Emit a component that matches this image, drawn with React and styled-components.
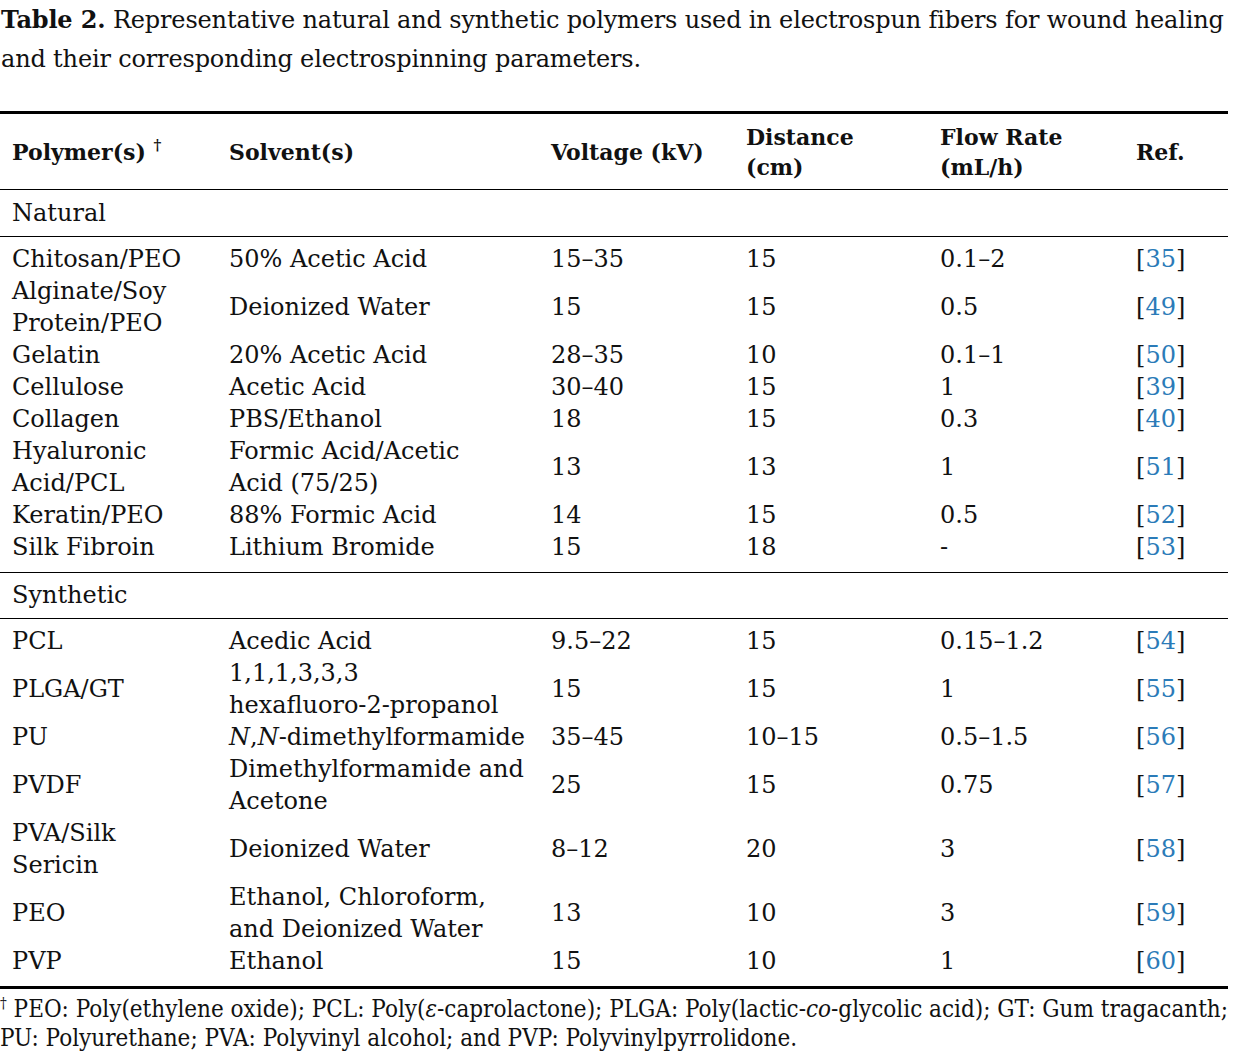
import styled, {createGlobalStyle} from "styled-components";

const GlobalStyle = createGlobalStyle`
  html, body {
    margin: 0;
    padding: 0;
    background: #fff;
  }
  body {
    font-family: "DejaVu Serif", "Liberation Serif", serif;
    color: #111;
  }
`;

const natural = [
  ["Chitosan/PEO", "50% Acetic Acid", "15–35", "15", "0.1–2", "35"],
  [["Alginate/Soy", "Protein/PEO"], "Deionized Water", "15", "15", "0.5", "49"],
  ["Gelatin", "20% Acetic Acid", "28–35", "10", "0.1–1", "50"],
  ["Cellulose", "Acetic Acid", "30–40", "15", "1", "39"],
  ["Collagen", "PBS/Ethanol", "18", "15", "0.3", "40"],
  [["Hyaluronic", "Acid/PCL"], ["Formic Acid/Acetic", "Acid (75/25)"], "13", "13", "1", "51"],
  ["Keratin/PEO", "88% Formic Acid", "14", "15", "0.5", "52"],
  ["Silk Fibroin", "Lithium Bromide", "15", "18", "-", "53"],
];

const synthetic = [
  ["PCL", "Acedic Acid", "9.5–22", "15", "0.15–1.2", "54"],
  ["PLGA/GT", ["1,1,1,3,3,3", "hexafluoro-2-propanol"], "15", "15", "1", "55"],
  ["PU", <><i>N</i>,<i>N</i>-dimethylformamide</>, "35–45", "10–15", "0.5–1.5", "56"],
  ["PVDF", ["Dimethylformamide and", "Acetone"], "25", "15", "0.75", "57"],
  [["PVA/Silk", "Sericin"], "Deionized Water", "8–12", "20", "3", "58"],
  ["PEO", ["Ethanol, Chloroform,", "and Deionized Water"], "13", "10", "3", "59"],
  ["PVP", "Ethanol", "15", "10", "1", "60"],
];

const widths = [217, 322, 195, 194, 196, 104];

const Lines = ({value}) => {
  if (!Array.isArray(value)) return value;
  return value.map((line, i) => (
    <span key={i}>
      {i > 0 && <br />}
      {line}
    </span>
  ));
};

const Group = ({label, rows}) => (
  <tbody>
    <tr>
      <GroupCell colSpan={6}>{label}</GroupCell>
    </tr>
    {rows.map((row, r) => {
      const edge = r === 0 ? "first" : r === rows.length - 1 ? "last" : "";
      return (
        <tr key={r}>
          {row.slice(0, 5).map((cell, c) => (
            <Cell key={c} $edge={edge}>
              <Lines value={cell} />
            </Cell>
          ))}
          <Cell $edge={edge}>
            [<RefNum>{row[5]}</RefNum>]
          </Cell>
        </tr>
      );
    })}
  </tbody>
);

const App = () => {
  return (
    <>
      <GlobalStyle />
      <Page>
        <Caption>
          <b>Table 2.</b> Representative natural and synthetic polymers used in electrospun fibers for wound healing
          <br />
          and their corresponding electrospinning parameters.
        </Caption>
        <Table>
          <colgroup>
            {widths.map((w, i) => (
              <col key={i} style={{width: w}} />
            ))}
          </colgroup>
          <thead>
            <tr>
              <Head>
                Polymer(s) <Sup>†</Sup>
              </Head>
              <Head>Solvent(s)</Head>
              <Head>Voltage (kV)</Head>
              <Head>
                Distance
                <br />
                (cm)
              </Head>
              <Head>
                Flow Rate
                <br />
                (mL/h)
              </Head>
              <Head>Ref.</Head>
            </tr>
          </thead>
          <Group label="Natural" rows={natural} />
          <Group label="Synthetic" rows={synthetic} />
        </Table>
        <Footnote>
          <sup>†</sup> PEO: Poly(ethylene oxide); PCL: Poly(<i>ε</i>-caprolactone); PLGA: Poly(lactic-<i>co</i>-glycolic
          acid); GT: Gum tragacanth;
          <br />
          PU: Polyurethane; PVA: Polyvinyl alcohol; and PVP: Polyvinylpyrrolidone.
        </Footnote>
      </Page>
    </>
  );
};

const Page = styled.div`
  width: 1236px;
  display: flex;
  flex-direction: column;
`;

const Caption = styled.p`
  margin: 0;
  padding-left: 1px;
  font-size: 24px;
  line-height: 39px;
  letter-spacing: -0.16px;
  white-space: nowrap;

  b {
    font-weight: bold;
  }
`;

const Table = styled.table`
  width: 1228px;
  margin-top: 32px;
  border-collapse: collapse;
  table-layout: fixed;
  border-top: 3px solid #000;
  border-bottom: 3px solid #000;
  font-size: 24px;

  tbody {
    border-top: 1px solid #000;
  }
`;

const Head = styled.th`
  height: 77px;
  padding: 0 0 0 12px;
  box-sizing: border-box;
  text-align: left;
  vertical-align: middle;
  font-weight: bold;
  font-size: 22px;
  line-height: 30px;
  white-space: nowrap;
`;

const Sup = styled.sup`
  font-size: 15px;
  vertical-align: 10px;
  line-height: 0;
`;

const GroupCell = styled.td`
  height: 45.5px;
  padding: 0 0 0 12px;
  border-bottom: 1px solid #000;
  vertical-align: middle;
  line-height: 32px;
`;

const Cell = styled.td`
  padding: ${(p) => (p.$edge === "first" ? "6px" : "0")} 0 ${(p) => (p.$edge === "last" ? "9px" : "0")} 12px;
  vertical-align: middle;
  line-height: 32px;
  white-space: nowrap;
`;

const RefNum = styled.span`
  color: #2b7bb8;
`;

const Footnote = styled.p`
  margin: 6px 0 0;
  font-family: "DejaVu Serif Condensed", "DejaVu Serif", serif;
  font-stretch: condensed;
  font-size: 24px;
  line-height: 29px;
  letter-spacing: 0;
  white-space: nowrap;

  sup {
    font-size: 15px;
    line-height: 0;
    vertical-align: 9px;
  }
`;

export default App;
